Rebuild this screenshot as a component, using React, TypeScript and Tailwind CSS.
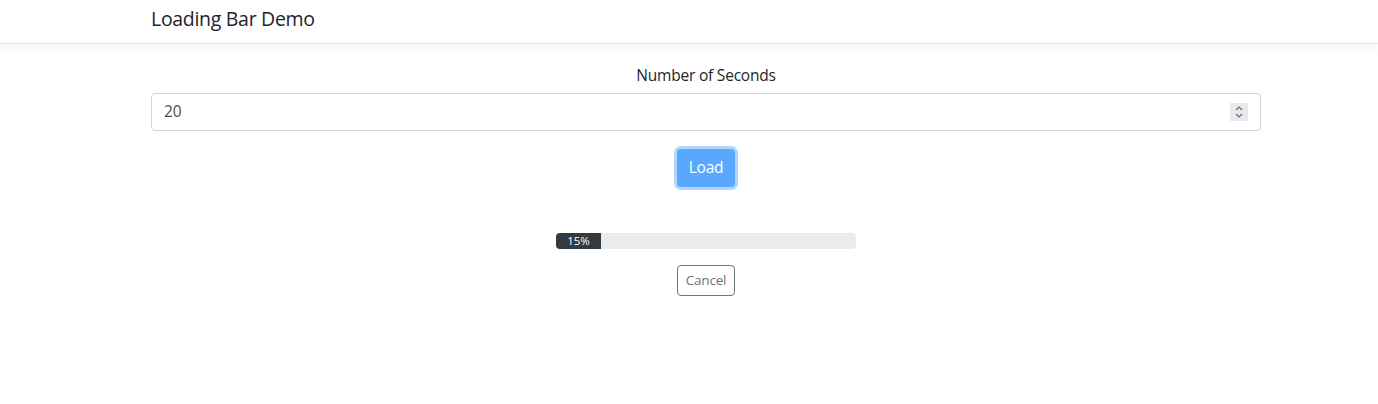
import React from "react";

export default function App() {
  return (
    <div className="min-h-[404px] bg-white" style={{ fontFamily: '"Open Sans", "Noto Sans", sans-serif' }}>
      <nav className="h-[44px] border-b border-[#dee2e6] bg-white shadow-[0_5px_14px_rgba(0,0,0,0.045)]">
        <div className="ml-[151px] w-[1110px] h-full flex items-center">
          <span className="text-[19.5px] leading-none text-[#212529] -mt-[6px] tracking-[-0.3px]">Loading Bar Demo</span>
        </div>
      </nav>
      <main className="ml-[151px] w-[1110px] flex flex-col items-center pt-[19px]">
        <label className="text-[15.5px] leading-[24px] text-[#212529] tracking-[-0.2px]">Number of Seconds</label>
        <div className="mt-[6px] w-full h-[38px] border border-[#ced4da] rounded-[4px] flex items-center pl-[12px] pr-[12px]">
          <span className="text-[15.5px] text-[#495057] flex-1">20</span>
          <div className="w-[18px] h-[18px] bg-[#e9e9ed] flex flex-col items-center justify-center">
            <svg width="10" height="16" viewBox="0 0 10 16" fill="none" stroke="#6b6b75" strokeWidth="1.2">
              <path d="M2 6 L5 3 L8 6" />
              <path d="M2 10 L5 13 L8 10" />
            </svg>
          </div>
        </div>
        <button className="mt-[18px] h-[38px] px-[12px] rounded-[4px] bg-[#58a9fe] text-white text-[15.5px] ring-[3px] ring-[#b1d6fe] tracking-[-0.2px]">
          Load
        </button>
        <div className="mt-[46px] w-[300px] h-[16px] bg-[#e9ecef] rounded-[4px] overflow-hidden flex">
          <div className="w-[45px] h-full bg-[#343a40] text-white text-[11.5px] flex items-center justify-center leading-none">15%</div>
        </div>
        <button className="mt-[16px] h-[31px] px-[8px] border border-[#6c757d] rounded-[4px] text-[#6c757d] text-[13.5px] tracking-[-0.2px]">
          Cancel
        </button>
      </main>
    </div>
  );
}
